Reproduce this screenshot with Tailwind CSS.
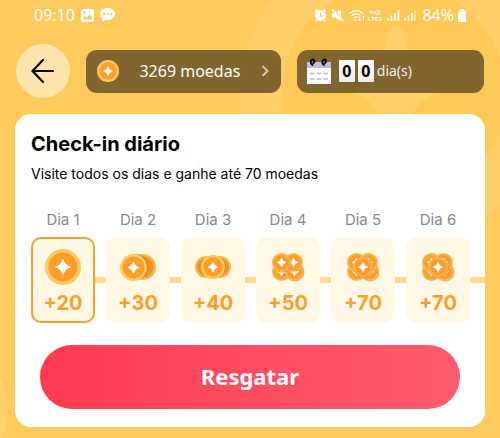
<!DOCTYPE html>
<html lang="pt-BR">
<head>
    <meta charset="UTF-8">
    <meta name="viewport" content="width=device-width, initial-scale=1.0">
    <title>Check-in diário</title>
    <script src="https://cdn.jsdelivr.net/npm/@tailwindcss/browser@4"></script>
</head>
<body class="relative min-h-screen overflow-x-hidden bg-[#ffca5c] font-['Noto_Sans',sans-serif]">
    <!-- shared coin shapes -->
    <svg class="hidden" aria-hidden="true">
        <symbol id="coin" viewBox="0 0 36 36">
            <circle cx="18" cy="18" r="18" fill="#ffca61"/>
            <circle cx="18" cy="18" r="14.5" fill="#ff9d2b"/>
            <path d="M18 10.5Q19.6 16.4 25.5 18Q19.6 19.6 18 25.5Q16.4 19.6 10.5 18Q16.4 16.4 18 10.5Z" fill="#fff" stroke="#fff" stroke-width="1"/>
        </symbol>
        <symbol id="coin-back" viewBox="0 0 36 36">
            <circle cx="18" cy="18" r="18" fill="#f7b850"/>
            <circle cx="18" cy="18" r="14.5" fill="#f58f22"/>
            <path d="M18 10.5Q19.6 16.4 25.5 18Q19.6 19.6 18 25.5Q16.4 19.6 10.5 18Q16.4 16.4 18 10.5Z" fill="#ffe3b0"/>
        </symbol>
        <!-- small coin with a larger star, used in the piles -->
        <symbol id="coin-small" viewBox="0 0 20 20">
            <circle cx="10" cy="10" r="10" fill="#f7b955"/>
            <circle cx="10" cy="10" r="8.2" fill="#ff9d2b"/>
            <path d="M10 5.5Q11 9 14.5 10Q11 11 10 14.5Q9 11 5.5 10Q9 9 10 5.5Z" fill="#fff" stroke="#fff" stroke-width=".8"/>
        </symbol>
        <symbol id="pile-four" viewBox="0 0 36 36">
            <circle cx="25" cy="23" r="9.5" fill="#edb062"/>
            <use href="#coin-small" x="2" y="13" width="19" height="19"/>
            <use href="#coin-small" x="15" y="13" width="19" height="19"/>
            <use href="#coin-small" x="14" y="4" width="19" height="19"/>
            <circle cx="12" cy="14" r="9.5" fill="#e99531"/>
            <use href="#coin-small" x="2" y="4" width="19" height="19"/>
        </symbol>
        <symbol id="pile-five" viewBox="0 0 36 36">
            <use href="#pile-four"/>
            <circle cx="18.5" cy="18.5" r="10" fill="#e08a2c"/>
            <use href="#coin-small" x="8" y="8" width="20" height="20"/>
        </symbol>
    </svg>

    <!-- background coins -->
    <svg class="absolute inset-0 h-full w-full" aria-hidden="true">
        <circle cx="394" cy="94" r="154" fill="#ffce69"/>
        <circle cx="394" cy="94" r="112" fill="#ffc857"/>
        <path d="M396 26Q402 26 404 34C411 68 420 76 452 83Q460 86 452 89C420 96 411 108 404 140L396 150L388 140C381 108 370 96 340 89Q333 86 340 83C372 76 381 68 388 34Q390 26 396 26Z" fill="#ffd06a"/>
        <circle cx="-58" cy="410" r="66" fill="#ffd06f"/>
    </svg>

    <div class="relative">
        <div class="flex h-[30px] items-center justify-between pr-[34px] pl-[34px] text-white">
            <div class="flex items-center gap-1.5">
                <span class="text-base">09:10</span>
                <svg class="h-[13px] w-[13px]" viewBox="0 0 13 13">
                    <path fill-rule="evenodd" d="M2 0H11Q13 0 13 2V11Q13 13 11 13H2Q0 13 0 11V2Q0 0 2 0ZM2 10.5H11V8L8.5 5.5L6 8.5L4.5 7L2 9.2ZM3.7 2.5A1.2 1.2 0 1 0 3.7 4.9A1.2 1.2 0 1 0 3.7 2.5Z" fill="#fff"/>
                </svg>
                <svg class="h-[14px] w-[15px]" viewBox="0 0 15 14">
                    <path d="M7.5 0C11.7 0 15 2.6 15 6S11.7 12 7.5 12Q6.5 12 5.5 11.8L2.3 14V10.5Q0 8.8 0 6C0 2.6 3.3 0 7.5 0Z" fill="#fff"/>
                    <path d="M3 5H5V7H3ZM6.5 5H8.5V7H6.5ZM10 5H12V7H10Z" fill="#ffca5c"/>
                </svg>
            </div>
            <div class="flex items-center">
                <svg class="h-3.5 w-[102px]" viewBox="0 0 102 14">
                    <!-- alarm -->
                    <circle cx="6.5" cy="7.5" r="5.4" fill="#fff"/>
                    <path d="M1 3.8L3.8 1.5M12 3.8L9.2 1.5M3 12L2 13.3M10 12L11 13.3" stroke="#fff" stroke-width="1.7"/>
                    <path d="M6.5 4.5V8H9.2" fill="none" stroke="#ffca5c" stroke-width="1.3"/>
                    <!-- muted speaker -->
                    <path d="M18 5H21L27 1.5V13L21 9.5H18Z" fill="#fff"/>
                    <path d="M18.5 1.5L30 13" stroke="#ffca5c" stroke-width="2"/>
                    <path d="M18 1.5L29.5 13" stroke="#fff" stroke-width="1.6"/>
                    <!-- wifi -->
                    <path d="M35.5 5.5Q42 -.5 49 5.500M37.5 8Q42 4 46.5 7.5M39.5 10Q42 8 44 9.5" fill="none" stroke="#fff" stroke-width="1.4"/>
                    <circle cx="41.5" cy="12" r="1.1" fill="#fff"/>
                    <path d="M45.5 8.5V13M44 11.5L45.5 13L47 11.5M49.5 13V8M48 9.5L49.500 8L51 9.5" fill="none" stroke="#fff" stroke-width="1"/>
                    <!-- volte -->
                    <g class="font-['Liberation_Sans',sans-serif] text-[6px] font-bold" fill="#fff">
                        <text x="55" y="6">Vo))</text>
                        <text x="54" y="13">LTE1</text>
                    </g>
                    <!-- signal bars -->
                    <path d="M74 10V13M77.5 7.5V13M81 5V13M84.5 2V13M91 10V13M94.5 7.5V13M98 5V13" stroke="#fff" stroke-width="1.6"/>
                    <path d="M101 2V13" stroke="#fff" stroke-opacity=".5" stroke-width="1.6"/>
                </svg>
                <span class="ml-1.5 text-base">84%</span>
                <svg class="ml-1 h-[13px] w-2" viewBox="0 0 8 13">
                    <path d="M2 0H6V1.5H7Q8 1.5 8 3V11.5Q8 13 6.5 13H1.5Q0 13 0 11.5V3Q0 1.5 1 1.5H2Z" fill="#fff"/>
                </svg>
            </div>
        </div>

        <header class="mt-3.5 grid grid-cols-[54px_194fr_187fr] items-center px-4">
            <button type="button" aria-label="Voltar" class="flex h-[54px] w-[54px] items-center justify-center rounded-full bg-[#ffe4ad]">
                <svg class="h-6 w-6" viewBox="0 0 24 24" fill="none" stroke="#000" stroke-width="2.2" stroke-linecap="round">
                    <path d="M12 1L1.5 12L12 23M1.5 12H22"/>
                </svg>
            </button>
            <a href="#" class="ml-4 flex h-[43px] items-center justify-between rounded-[11px] bg-[#80652e] pr-3 pl-[11px] text-white">
                <svg class="h-[22px] w-[22px]"><use href="#coin"/></svg>
                <span class="text-base">3269 moedas</span>
                <svg class="h-3 w-2" viewBox="0 0 8 12" fill="none" stroke="#d3c5a7" stroke-width="2">
                    <path d="M1.5 1L6.5 6L1.5 11"/>
                </svg>
            </a>
            <div class="ml-4 flex h-[43px] items-center rounded-[11px] bg-[#80652e] pl-2.5">
                <svg class="h-[27px] w-6" viewBox="0 0 24 27">
                    <path d="M0 4H24V26H0Z" fill="#fff"/>
                    <path d="M0 4H24V10H0Z" fill="#c5bde0"/>
                    <path d="M5.5 7C2.5 5 4 1 6.5 1.5Q8.5 3.5 6.5 5M17 7C14 5 15.5 1 18 1.5Q20 3.5 18 5" fill="none" stroke="#000" stroke-width="1.9" stroke-linecap="round"/>
                    <path d="M3 15.5H21M3 21H21" stroke="#bdb5d8" stroke-width="1.6" stroke-dasharray="4.5 2.2"/>
                </svg>
                <span class="ml-2 flex gap-[3px] text-base font-bold text-black">
                    <span class="flex h-[22px] w-4 items-center justify-center rounded-[1px] bg-linear-to-b from-white to-[#ececec]">0</span>
                    <span class="flex h-[22px] w-4 items-center justify-center rounded-[1px] bg-linear-to-b from-white to-[#ececec]">0</span>
                </span>
                <span class="ml-[3px] text-sm text-[#f3eee4]">dia(s)</span>
            </div>
        </header>

        <main class="mx-[15px] mt-4 overflow-hidden rounded-2xl bg-white pt-4 pb-[18px] font-[Inter,sans-serif]">
            <h1 class="pl-4 text-xl leading-7 font-bold text-black">Check-in diário</h1>
            <p class="mt-1 pl-4 text-sm leading-6 text-black">Visite todos os dias e ganhe até 70 moedas</p>

            <ol class="mt-6 flex pl-4 text-center">
                <li class="w-[75px] shrink-0">
                    <p class="w-16 text-[15px] leading-5 text-[#8a8a8a]">Dia 1</p>
                    <div class="mt-[7px] flex items-center">
                        <div class="flex h-[86px] w-16 flex-col items-center rounded-[10px] bg-[#fff8e5] pt-3 ring-2 ring-[#ff9d2b] ring-inset">
                            <svg class="h-9 w-9"><use href="#coin"/></svg>
                            <span class="mt-2 text-xl leading-5 font-bold text-[#ff9d2b]">+20</span>
                        </div>
                        <div class="h-1.5 flex-1 bg-[#ffdb8a]"></div>
                    </div>
                </li>
                <li class="w-[75px] shrink-0">
                    <p class="w-16 text-[15px] leading-5 text-[#8a8a8a]">Dia 2</p>
                    <div class="mt-[7px] flex items-center">
                        <div class="flex h-[86px] w-16 flex-col items-center rounded-[10px] bg-[#fff8e5] pt-3">
                            <svg class="h-9 w-9" viewBox="0 0 36 36">
                                <use href="#coin-back" x="10" y="5" width="26" height="26"/>
                                <circle cx="15.5" cy="18" r="13" fill="#df8421"/>
                                <use href="#coin" x="0" y="5" width="27" height="27"/>
                            </svg>
                            <span class="mt-2 text-xl leading-5 font-bold text-[#ff9d2b]">+30</span>
                        </div>
                        <div class="h-1.5 flex-1 bg-[#ffdb8a]"></div>
                    </div>
                </li>
                <li class="w-[75px] shrink-0">
                    <p class="w-16 text-[15px] leading-5 text-[#8a8a8a]">Dia 3</p>
                    <div class="mt-[7px] flex items-center">
                        <div class="flex h-[86px] w-16 flex-col items-center rounded-[10px] bg-[#fff8e5] pt-3">
                            <svg class="h-9 w-9" viewBox="0 0 36 36">
                                <use href="#coin-back" x="0" y="7" width="22" height="22"/>
                                <use href="#coin-back" x="14" y="7" width="22" height="22"/>
                                <circle cx="19" cy="18" r="11.5" fill="#df8421"/>
                                <use href="#coin" x="6" y="6" width="24" height="24"/>
                            </svg>
                            <span class="mt-2 text-xl leading-5 font-bold text-[#ff9d2b]">+40</span>
                        </div>
                        <div class="h-1.5 flex-1 bg-[#ffdb8a]"></div>
                    </div>
                </li>
                <li class="w-[75px] shrink-0">
                    <p class="w-16 text-[15px] leading-5 text-[#8a8a8a]">Dia 4</p>
                    <div class="mt-[7px] flex items-center">
                        <div class="flex h-[86px] w-16 flex-col items-center rounded-[10px] bg-[#fff8e5] pt-3">
                            <svg class="h-9 w-9"><use href="#pile-four"/></svg>
                            <span class="mt-2 text-xl leading-5 font-bold text-[#ff9d2b]">+50</span>
                        </div>
                        <div class="h-1.5 flex-1 bg-[#ffdb8a]"></div>
                    </div>
                </li>
                <li class="w-[75px] shrink-0">
                    <p class="w-16 text-[15px] leading-5 text-[#8a8a8a]">Dia 5</p>
                    <div class="mt-[7px] flex items-center">
                        <div class="flex h-[86px] w-16 flex-col items-center rounded-[10px] bg-[#fff8e5] pt-3">
                            <svg class="h-9 w-9"><use href="#pile-five"/></svg>
                            <span class="mt-2 text-xl leading-5 font-bold text-[#ff9d2b]">+70</span>
                        </div>
                        <div class="h-1.5 flex-1 bg-[#ffdb8a]"></div>
                    </div>
                </li>
                <li class="flex-1">
                    <p class="w-16 text-[15px] leading-5 text-[#8a8a8a]">Dia 6</p>
                    <div class="mt-[7px] flex items-center">
                        <div class="flex h-[86px] w-16 flex-col items-center rounded-[10px] bg-[#fff8e5] pt-3">
                            <svg class="h-9 w-9"><use href="#pile-five"/></svg>
                            <span class="mt-2 text-xl leading-5 font-bold text-[#ff9d2b]">+70</span>
                        </div>
                        <div class="h-1.5 flex-1 bg-[#ffdb8a]"></div>
                    </div>
                </li>
            </ol>

            <div class="mt-[22px] px-[25px]">
                <button type="button" class="h-16 w-full rounded-full bg-linear-to-r from-[#ff3950] to-[#ff5b6e] pb-0.5 font-['Noto_Sans',sans-serif] text-[22px] font-bold text-white">Resgatar</button>
            </div>
        </main>
    </div>
</body>
</html>
